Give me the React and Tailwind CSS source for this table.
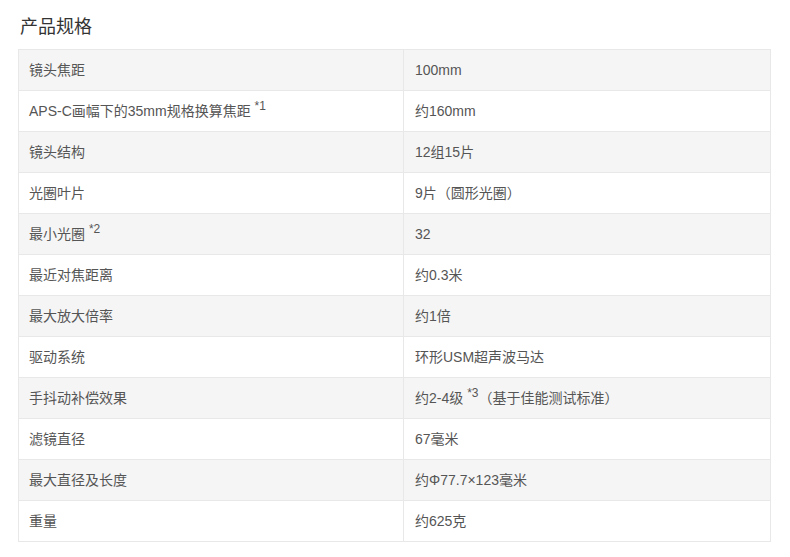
const specs = [
  ['镜头焦距', '100mm'],
  [<>APS-C画幅下的35mm规格换算焦距 <sup>*1</sup></>, '约160mm'],
  ['镜头结构', '12组15片'],
  ['光圈叶片', '9片（圆形光圈）'],
  [<>最小光圈 <sup>*2</sup></>, '32'],
  ['最近对焦距离', '约0.3米'],
  ['最大放大倍率', '约1倍'],
  ['驱动系统', '环形USM超声波马达'],
  ['手抖动补偿效果', <>约2-4级 <sup>*3</sup>（基于佳能测试标准）</>],
  ['滤镜直径', '67毫米'],
  ['最大直径及长度', '约Φ77.7×123毫米'],
  ['重量', '约625克'],
]

export default function App() {
  return (
    <div className="min-h-[557px] bg-white px-[18px] pt-[15px] font-['Liberation_Sans','Noto_Sans_CJK_SC',sans-serif]">
      <h2 className="pl-[2px] text-[18px] leading-[24px] text-[#333]">产品规格</h2>
      <table className="mt-[10px] w-[753px] border-collapse text-[14px] text-[#555]">
        <tbody>
          {specs.map(([label, value], i) => (
            <tr key={i} className={i % 2 === 0 ? 'bg-[#f5f5f5]' : 'bg-white'}>
              <td className="h-[41px] w-[385px] border border-[#e8e8e8] px-[10px] align-middle [&_sup]:text-[12px]">{label}</td>
              <td className="h-[41px] border border-[#e8e8e8] px-[11px] align-middle [&_sup]:text-[12px]">{value}</td>
            </tr>
          ))}
        </tbody>
      </table>
    </div>
  )
}
